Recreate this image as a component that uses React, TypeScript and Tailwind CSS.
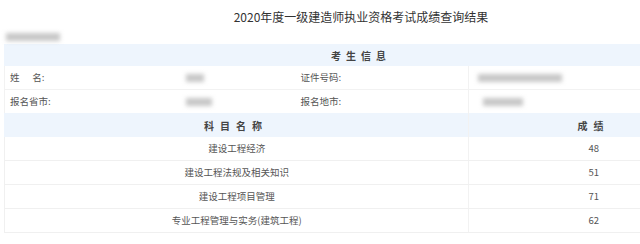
const font = { fontFamily: '"Noto Sans CJK SC", "Noto Sans", sans-serif' };

const subjects = [
  { name: "建设工程经济", score: 48 },
  { name: "建设工程法规及相关知识", score: 51 },
  { name: "建设工程项目管理", score: 71 },
  { name: "专业工程管理与实务(建筑工程)", score: 62 },
];

function Blur({ w }: { w: string }) {
  return <div className={`h-[8px] ${w} bg-[#c8c8c8] blur-[2px]`} />;
}

export default function App() {
  return (
    <div className="w-[640px] h-[244px] overflow-hidden bg-white text-[#555]" style={font}>
      <div className="ml-[4px] w-[714px]">
        <div className="h-[30px] flex items-center justify-center pt-[4px] text-[12px] text-[#333]">
          2020年度一级建造师执业资格考试成绩查询结果
        </div>
        <div className="h-[14px] pt-[3px] pl-[2px]">
          <Blur w="w-[54px]" />
        </div>

        <div className="h-[22px] bg-[#eef5fd] flex items-center justify-center text-[10px] font-bold tracking-[5px] text-[#444]">
          考生信息
        </div>
        <div className="flex h-[24px] items-center text-[9.5px] border-b border-l border-[#f2f2f2]">
          <div className="w-[173px] pl-[5px] whitespace-pre">姓      名:</div>
          <div className="w-[118px] pl-[8px]">
            <Blur w="w-[18px]" />
          </div>
          <div className="w-[173px] pl-[5px]">证件号码:</div>
          <div className="w-[250px] h-full flex items-center pl-[9px] border-l border-[#f2f2f2]">
            <Blur w="w-[84px]" />
          </div>
        </div>
        <div className="flex h-[23px] items-center text-[9.5px] border-l border-[#f2f2f2]">
          <div className="w-[173px] pl-[5px]">报名省市:</div>
          <div className="w-[118px] pl-[8px]">
            <Blur w="w-[26px]" />
          </div>
          <div className="w-[173px] pl-[5px]">报名地市:</div>
          <div className="w-[250px] h-full flex items-center pl-[14px] border-l border-[#f2f2f2]">
            <Blur w="w-[40px]" />
          </div>
        </div>

        <div className="flex h-[24px] items-center bg-[#eef5fd] text-[10px] font-bold text-[#444]">
          <div className="w-[464px] text-center tracking-[6px]">科目名称</div>
          <div className="w-[250px] h-full flex items-center justify-center tracking-[6px] border-l border-[#f2f2f2]">
            成绩
          </div>
        </div>
        {subjects.map((s) => (
          <div key={s.name} className="flex h-[24px] items-center text-[9.5px] border-b border-l border-[#f0f0f0]">
            <div className="w-[464px] text-center">{s.name}</div>
            <div className="w-[250px] h-full flex items-center justify-center border-l border-[#f2f2f2]">
              {s.score}
            </div>
          </div>
        ))}
      </div>
    </div>
  );
}
